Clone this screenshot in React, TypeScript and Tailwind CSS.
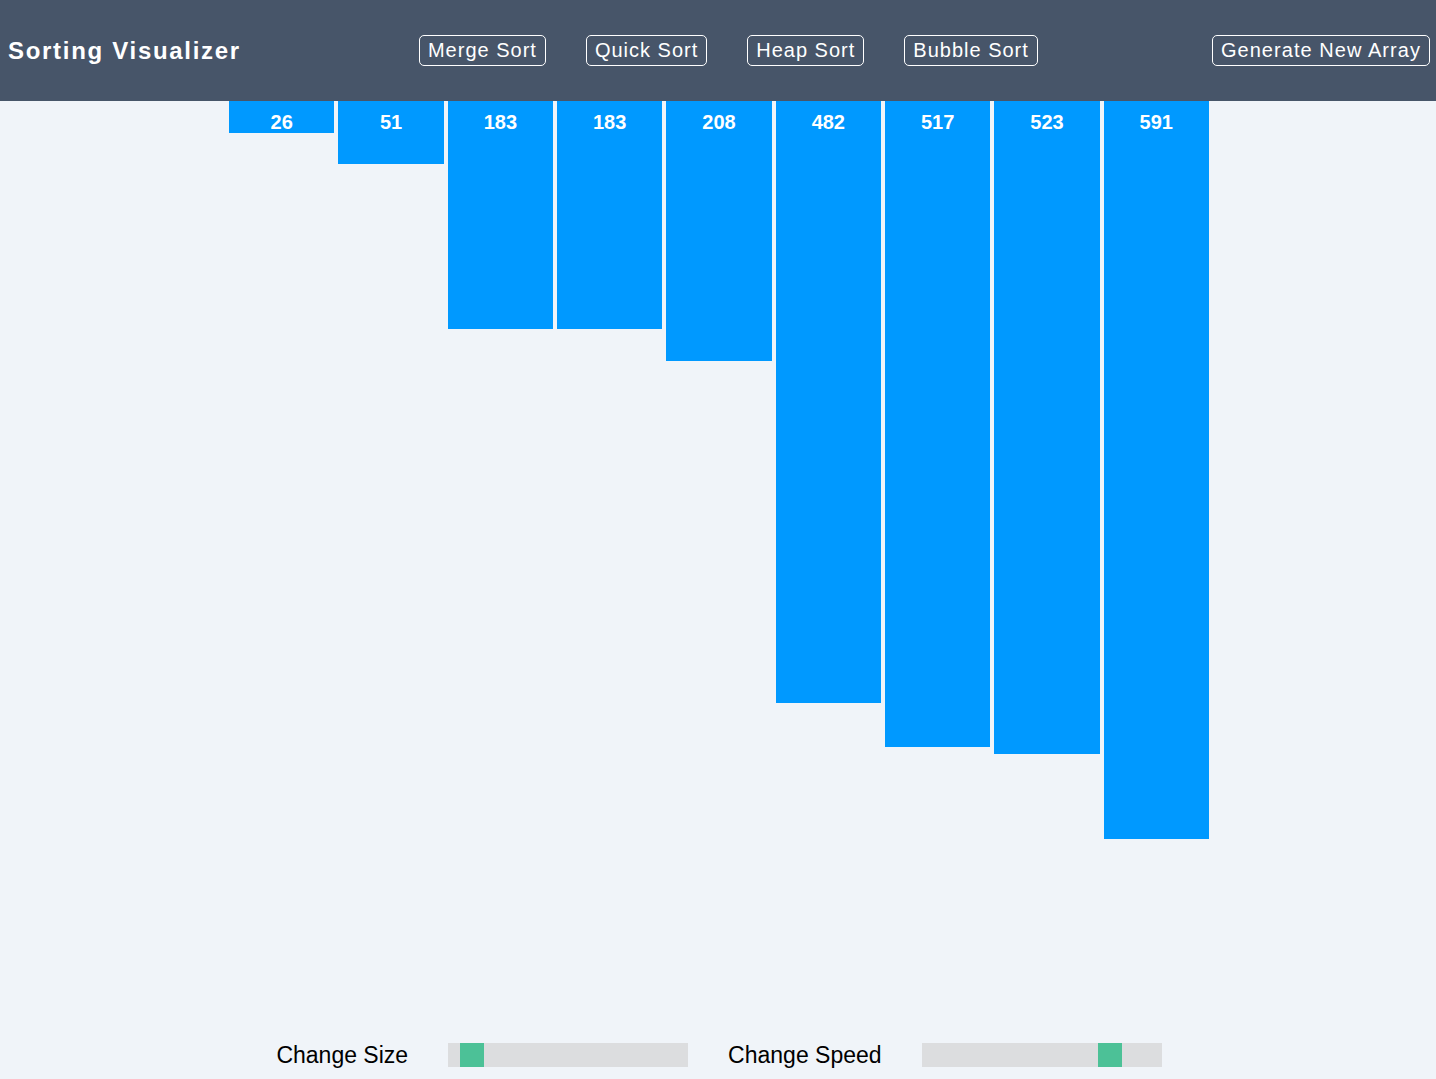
import React from "react";

const values = [26, 51, 183, 183, 208, 482, 517, 523, 591];

export default function App() {
  return (
    <div
      className="h-screen w-full flex flex-col bg-[#f0f4f9] overflow-hidden"
      style={{ fontFamily: '"Liberation Sans", Arial, sans-serif' }}
    >
      <header className="h-[101px] shrink-0 bg-[#475569] flex items-center justify-between pl-2 pr-[6px] text-white">
        <h1 className="text-[24px] font-bold tracking-[1.7px] leading-none">Sorting Visualizer</h1>
        <div className="flex gap-10 pl-[4px]">
          {["Merge Sort", "Quick Sort", "Heap Sort", "Bubble Sort"].map((t) => (
            <button
              key={t}
              className="border border-white rounded-[5px] px-[8px] py-[3px] text-[20px] leading-[23px] tracking-[1px] text-white"
            >
              {t}
            </button>
          ))}
        </div>
        <button className="border border-white rounded-[5px] px-[8px] py-[3px] text-[20px] leading-[23px] tracking-[1.05px] text-white">
          Generate New Array
        </button>
      </header>
      <main className="flex-1 flex justify-center items-start pl-[2px]">
        {values.map((v, i) => (
          <div
            key={i}
            className="w-[105.33px] mx-[2px] bg-[#0099ff] text-white font-bold text-[20px] leading-[23px] text-center pt-[10px]"
            style={{ height: `${Math.floor(v * 1.25)}px` }}
          >
            {v}
          </div>
        ))}
      </main>
      <footer className="shrink-0 flex justify-center items-center gap-10 pb-3 pl-[2px] text-[23px] text-black">
        <span className="leading-[24px]">Change Size</span>
        <div className="w-[240px] h-6 bg-[#dcdddf] relative">
          <div className="absolute top-0 left-[12px] w-6 h-6 bg-[#4cc197]" />
        </div>
        <span className="leading-[24px]">Change Speed</span>
        <div className="w-[240px] h-6 bg-[#dcdddf] relative">
          <div className="absolute top-0 left-[176px] w-6 h-6 bg-[#4cc197]" />
        </div>
      </footer>
    </div>
  );
}
